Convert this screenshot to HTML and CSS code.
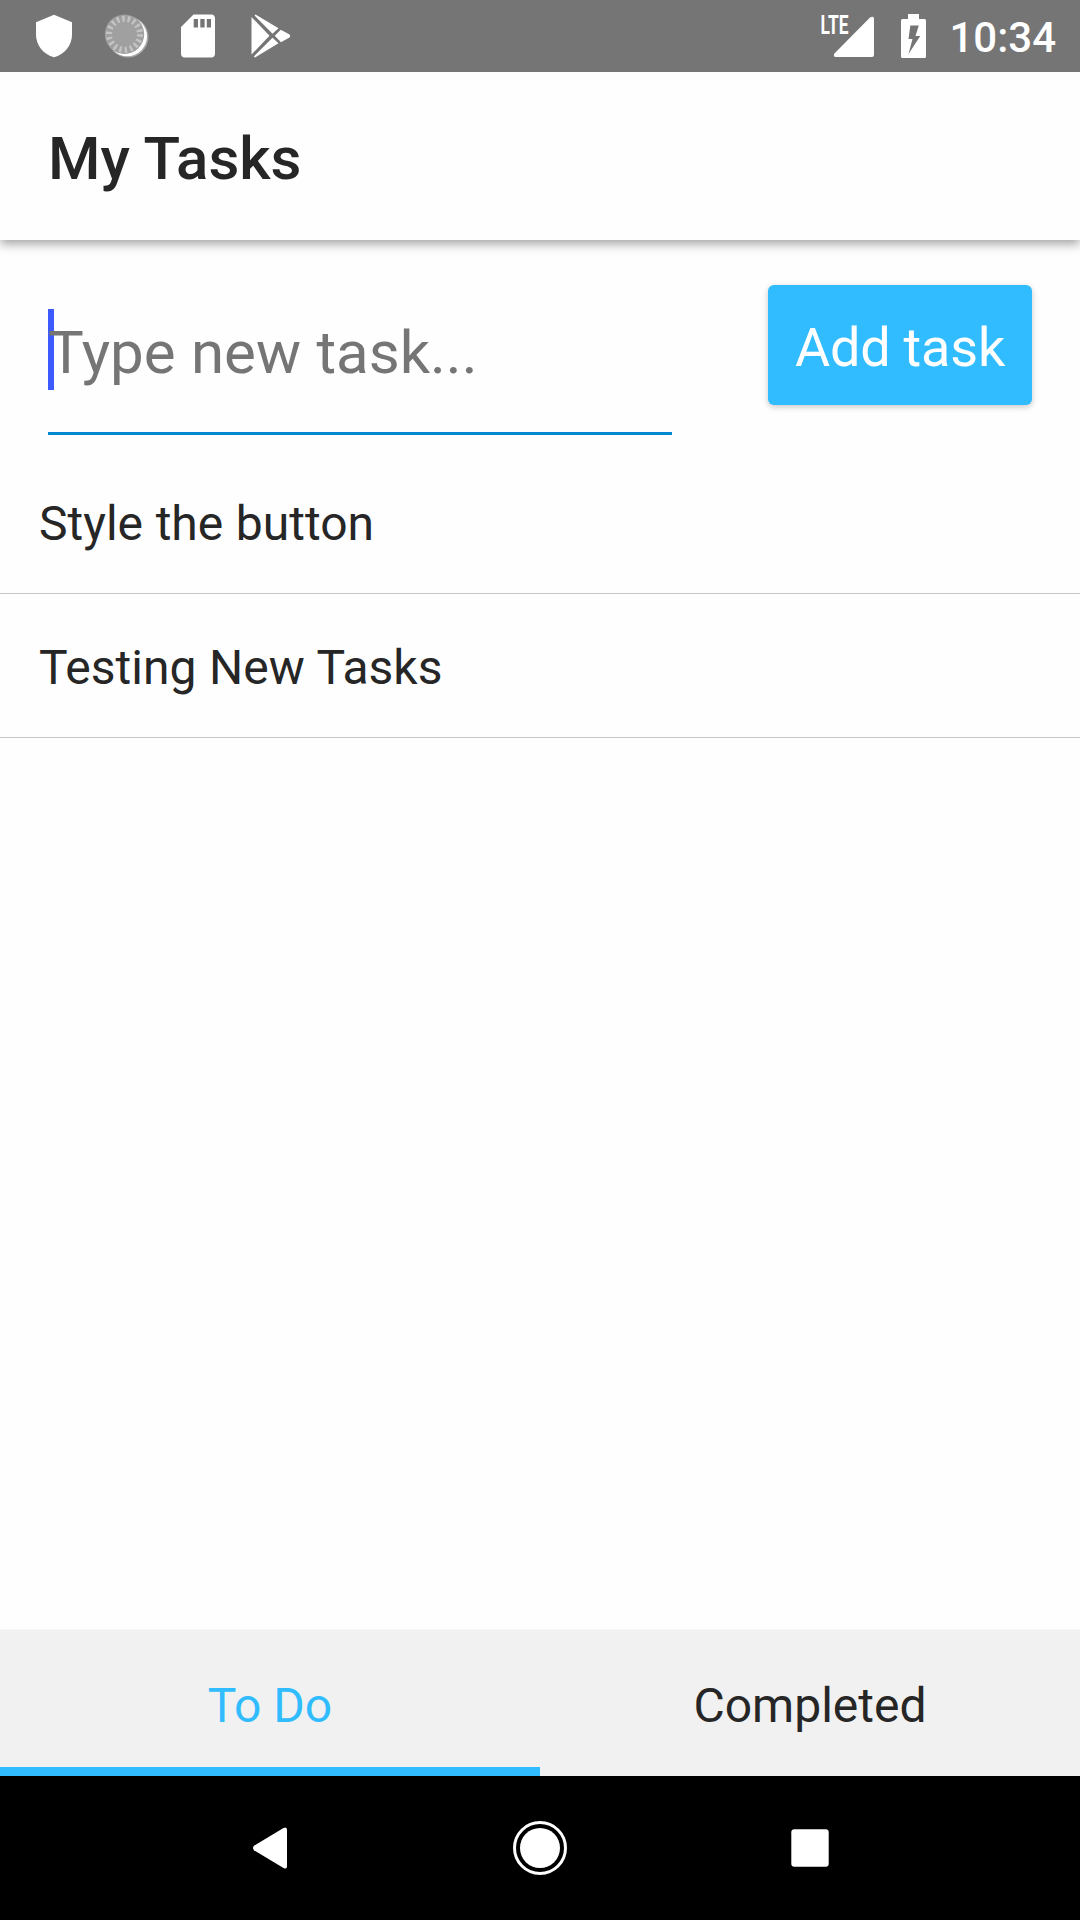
FILE: index.html
```html
<!DOCTYPE html>
<html lang="en">
<head>
<meta charset="utf-8">
<title>My Tasks</title>
<link rel="stylesheet" href="styles.css">
</head>
<body>
<div class="screen">
  <div class="status-bar">
    <div class="status-left">
      <svg class="status-icon" viewBox="0 0 72 72"><path fill="#fff" d="M36 14.7 54 22.3V34.5C54 45.5 46.5 54.5 36 57.3 25.500 54.500 18 45.500 18 34.500V22.300Z"/></svg>
      <svg class="status-icon" viewBox="0 0 72 72">
        <circle cx="38" cy="37" r="20.500" fill="#a6a6a6"/>
        <circle cx="37.300" cy="36.500" r="19.700" fill="#fff"/>
        <circle cx="34.500" cy="34.300" r="19.700" fill="#a0a0a0"/>
        <circle cx="34.500" cy="34.300" r="15.500" fill="none" stroke="#c4c4c4" stroke-width="6" stroke-dasharray="2.400 3.010"/>
      </svg>
      <svg class="status-icon" viewBox="0 0 72 72"><path fill="#fff" fill-rule="evenodd" d="M31.500 14.500H49a4 4 0 0 1 4 4V53.500a4 4 0 0 1-4 4H23a4 4 0 0 1-4-4V27ZM31.700 19V27.500H36V19ZM38.300 19V27.500H42.600V19ZM44.800 19V27.500H49V19Z"/></svg>
      <svg class="status-icon" viewBox="0 0 72 72">
        <g fill="#fff"><path d="M17.500 17 35.500 35.700 17.500 54.500Z"/><path d="M21.500 14.500 44.500 28.300 38.500 33.800 20.500 15.500Z"/><path d="M46.800 29.800 55.500 34.600Q57 36 55.500 37.400L47 42.300 40.700 35.800Z"/><path d="M38.500 37.700 44.500 43.300 21 57.500 19.800 56.500Z"/></g>
      </svg>
    </div>
    <div class="status-right">
      <svg class="signal" viewBox="0 0 54 72"><text class="lte" x="0.500" y="34" textLength="28" lengthAdjust="spacingAndGlyphs">LTE</text><path fill="#fff" d="M50 17.500Q54 15.500 54 19V55Q54 57 52 57H16Q13 57 14.200 53.700Z"/></svg>
      <svg class="battery" viewBox="0 0 26 72"><path fill="#fff" fill-rule="evenodd" d="M7 14H18V19H23.500Q25 19 25 20.500V56.500Q25 58 23.500 58H1.500Q0 58 0 56.500V20.500Q0 19 1.500 19H7ZM9.300 25.500 7.500 39H11.500L7.500 54 19.300 36H14.500L17.800 25.500Z"/></svg>
      <span class="clock">10:34</span>
    </div>
  </div>
  <header class="app-bar"><h1 class="title">My Tasks</h1></header>
  <main class="content">
    <div class="entry">
      <div class="field"><span class="placeholder">Type new task...</span></div>
      <button class="add">Add task</button>
    </div>
    <ul class="tasks">
      <li class="task">Style the button</li>
      <li class="task">Testing New Tasks</li>
    </ul>
  </main>
  <div class="tabs">
    <div class="tab tab-active">To Do</div>
    <div class="tab">Completed</div>
  </div>
  <nav class="nav-bar">
    <svg class="nav-icon" viewBox="0 0 60 60"><path fill="#fff" d="M43.500 10Q47 8.200 47 12V48Q47 51.800 43.500 50L14 32.200Q12 30 14 27.800Z"/></svg>
    <svg class="nav-icon" viewBox="0 0 60 60"><circle cx="30" cy="30" r="25.500" fill="none" stroke="#fff" stroke-width="3"/><circle cx="30" cy="30" r="20" fill="#fff"/></svg>
    <svg class="nav-icon" viewBox="0 0 60 60"><rect x="11.300" y="11.300" width="37.400" height="37.400" rx="3" fill="#fff"/></svg>
  </nav>
</div>
</body>
</html>
```
FILE: styles.css
```css
* { box-sizing: border-box; }
body {
  margin: 0;
  font-family: Roboto, "Liberation Sans", sans-serif;
  color: #262626;
  background: #fefefe;
}
.screen {
  display: flex;
  flex-direction: column;
  width: 1080px;
  height: 1920px;
  overflow: hidden;
}
svg { display: block; }
.status-bar {
  display: flex;
  justify-content: space-between;
  flex: 0 0 72px;
  height: 72px;
  padding: 0 24px 0 18px;
  background: #757575;
}
.status-left, .status-right { display: flex; }
.status-icon { width: 72px; height: 72px; }
.signal { width: 54px; height: 72px; margin-right: 27px; }
.lte { font: 700 26px Roboto, sans-serif; fill: #fff; }
.battery { width: 26px; height: 72px; margin-right: 22px; }
.clock {
  height: 72px;
  font-size: 42px;
  font-weight: 500;
  line-height: 75px;
  color: #fff;
}
.app-bar {
  display: flex;
  align-items: center;
  flex: 0 0 168px;
  padding: 5px 48px 0;
  background: #fefefe;
  box-shadow: 0 4px 10px rgba(0, 0, 0, 0.36);
  clip-path: inset(0 0 -24px 0);
  z-index: 1;
}
.title { margin: 0; font-size: 60px; font-weight: 500; line-height: 72px; }
.content { flex: 1; }
.entry {
  display: flex;
  justify-content: space-between;
  align-items: flex-start;
  height: 210px;
  padding: 45px 48px 0;
}
.field {
  width: 624px;
  height: 150px;
  padding-top: 24px;
  border-bottom: 3px solid #0288d1;
}
.placeholder {
  display: block;
  height: 81px;
  line-height: 87px;
  font-size: 60px;
  word-spacing: 0.5px;
  color: #757575;
  background: linear-gradient(#3d5afe, #3d5afe) no-repeat 0 0 / 6px 81px;
}
.add {
  width: 264px;
  height: 120px;
  padding: 6px 0 0;
  border: 0;
  border-radius: 6px;
  font: 400 54px/64px Roboto, sans-serif;
  letter-spacing: -0.2px;
  color: #fff;
  background: #30bcff;
  box-shadow: 0 2px 6px rgba(0, 0, 0, 0.22);
}
.tasks { margin: 0; padding: 0; list-style: none; }
.task {
  height: 144px;
  padding: 2px 39px 0;
  border-bottom: 1px solid #c8c8c8;
  font-size: 48px;
  line-height: 144px;
  word-spacing: 0.7px;
}
.tabs {
  display: flex;
  flex: 0 0 147px;
  height: 147px;
  background: #f1f1f1;
  border-top: 1px solid #f7f7f7;
}
.tab {
  flex: 1;
  height: 146px;
  padding-top: 4px;
  font-size: 48px;
  line-height: 144px;
  text-align: center;
}
.tab-active { color: #30bcff; border-bottom: 9px solid #30bcff; }
.nav-bar {
  display: flex;
  justify-content: center;
  align-items: center;
  gap: 210px;
  flex: 0 0 144px;
  background: #000;
}
.nav-icon { width: 60px; height: 60px; }
```
